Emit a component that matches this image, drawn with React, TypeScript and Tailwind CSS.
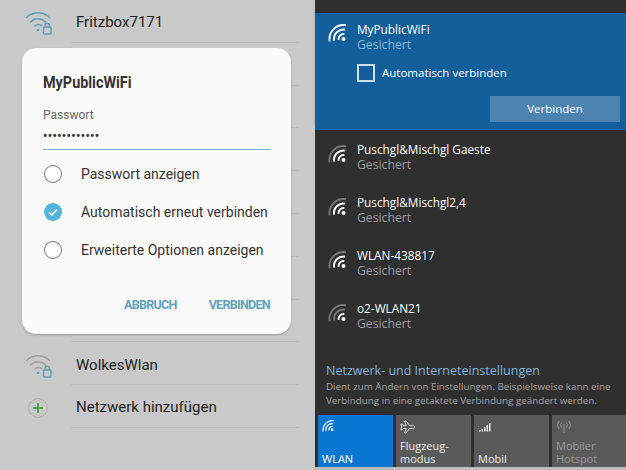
const roboto = "font-['Roboto',sans-serif]";
const segoe = "font-['Open_Sans','Noto_Sans',sans-serif]";

function arc(r: number, cx = 15.5, cy = 15) {
  const a1 = (190 * Math.PI) / 180;
  const a2 = (80 * Math.PI) / 180;
  const x1 = cx + r * Math.cos(a1);
  const y1 = cy - r * Math.sin(a1);
  const x2 = cx + r * Math.cos(a2);
  const y2 = cy - r * Math.sin(a2);
  return `M${x1.toFixed(2)} ${y1.toFixed(2)}A${r} ${r} 0 0 1 ${x2.toFixed(2)} ${y2.toFixed(2)}`;
}

function WinWifi({ bars, size = 20 }: { bars: number; size?: number }) {
  return (
    <svg width={size} height={size} viewBox="0 0 20 20" fill="none" strokeWidth="1.9" className="shrink-0">
      <path d={arc(14)} stroke="#fff" strokeOpacity={bars >= 3 ? 1 : 0.35} />
      <path d={arc(9.5)} stroke="#fff" strokeOpacity={bars >= 2 ? 1 : 0.35} />
      <path d={arc(5)} stroke="#fff" />
      <circle cx="15.5" cy="15" r="2" fill="#fff" />
    </svg>
  );
}

function PhoneWifi({ color }: { color: string }) {
  return (
    <svg width="28" height="25" viewBox="0 0 28 25" fill="none" strokeLinecap="round">
      <path d="M1.5 7.5C8 1 18 1 24.5 7.5" stroke={color} strokeWidth="1.5" />
      <path d="M5.5 12C10 7.7 16 7.7 20.5 12" stroke={color} strokeWidth="1.5" />
      <path d="M9.5 16C11.7 14.2 14.3 14.2 16.5 15.5" stroke={color} strokeWidth="1.5" />
      <circle cx="13" cy="20" r="1.3" fill="#5f9fbd" />
      <rect x="18.5" y="17" width="7.5" height="7" rx="1" stroke="#5f9fbd" strokeWidth="1.5" />
      <path d="M20 17v-1.5a2.2 2.2 0 0 1 4.4 0V17" stroke="#5f9fbd" strokeWidth="1.5" />
    </svg>
  );
}

function Radio({ checked }: { checked?: boolean }) {
  if (checked) {
    return (
      <svg width="18" height="18" viewBox="0 0 18 18" className="shrink-0">
        <circle cx="9" cy="9" r="9" fill="#4fb4de" />
        <path d="M5 9.3l2.8 2.7L13 6.5" fill="none" stroke="#fff" strokeWidth="1.6" />
      </svg>
    );
  }
  return <span className="size-[18px] shrink-0 rounded-full border border-[#777] bg-white" />;
}

const phoneRows = [
  { label: "Fritzbox7171", icon: <PhoneWifi color="#5f9fbd" /> },
  {},
  {},
  {},
  {},
  {},
  {},
  {},
  { label: "WolkesWlan", icon: <PhoneWifi color="#a3a3a3" /> },
  {
    label: "Netzwerk hinzufügen",
    icon: (
      <svg width="20" height="20" viewBox="0 0 20 20" fill="none" className="ml-[3px]">
        <circle cx="10" cy="10" r="9.4" stroke="#adadad" />
        <path d="M10 5v10M5 10h10" stroke="#2f9e35" strokeWidth="1.7" />
      </svg>
    ),
  },
];

function PhonePanel() {
  return (
    <div className={`relative h-full w-[315px] shrink-0 bg-[#c9c9c9] ${roboto}`}>
      <div className="flex flex-col">
        {phoneRows.map((row, i) => (
          <div key={i} className="flex h-[42.8px] items-stretch">
            <div className="flex w-[76px] shrink-0 items-center pl-[25px] pt-[3px]">{row.icon}</div>
            <div className="mr-[16px] flex flex-1 -ml-[5px] items-center border-b border-[#bcbcbc] pl-[5px] pt-[3px] text-[15px] text-[#222]">
              {row.label}
            </div>
          </div>
        ))}
      </div>
      <div className="absolute right-0 top-0 h-[125px] w-[2px] bg-[#bdc3c9]" />

      <div className="absolute left-[22px] top-[48px] flex h-[286px] w-[269px] flex-col rounded-[14px] bg-[#fbfbfb] px-[21px] pt-[25px] shadow-[0_1px_2px_rgba(0,0,0,0.25)]">
        <div className="origin-left scale-x-[0.9] whitespace-nowrap text-[16px] font-bold leading-[20px] text-[#333]">MyPublicWiFi</div>
        <div className="mt-[14px] text-[12px] leading-[16px] text-[#666]">Passwort</div>
        <div className="mt-[5px] h-[22px] border-b border-[#6db4d4] text-[12px] font-bold leading-[16px] tracking-[0.4px] text-[#333]">••••••••••••</div>
        <div className="mt-[5px] flex flex-col">
          {[
            { label: "Passwort anzeigen" },
            { label: "Automatisch erneut verbinden", checked: true },
            { label: "Erweiterte Optionen anzeigen" },
          ].map((o) => (
            <div key={o.label} className="flex h-[38px] items-center gap-[19px] pl-[1px] text-[14px] text-[#333]">
              <Radio checked={o.checked} />
              <span className="whitespace-nowrap">{o.label}</span>
            </div>
          ))}
        </div>
        <div className="mt-[27px] flex justify-end gap-[32px] text-[12.5px] font-bold leading-[18px] tracking-[-0.7px] text-[#5ea2c0]">
          <span>ABBRUCH</span>
          <span>VERBINDEN</span>
        </div>
      </div>
    </div>
  );
}

const networks = [
  { name: "Puschgl&Mischgl Gaeste", bars: 2 },
  { name: "Puschgl&Mischgl2,4", bars: 2 },
  { name: "WLAN-438817", bars: 2 },
  { name: "o2-WLAN21", bars: 1 },
];

function Tile({ label, active, dim, children }: { label: string; active?: boolean; dim?: boolean; children: React.ReactNode }) {
  return (
    <div
      className={`flex h-[52px] w-[75px] flex-col justify-between px-[4px] pb-[2px] pt-[5px] text-[11px] leading-[13px] ${
        active ? "bg-[#0a78d2] text-white" : "bg-[#5a5a5a]"
      } ${dim ? "text-[#9a9a9a]" : active ? "" : "text-[#ececec]"}`}
    >
      <div className="h-[15px]">{children}</div>
      <div className="whitespace-pre-line">{label}</div>
    </div>
  );
}

function WindowsPanel() {
  return (
    <div className={`flex h-full flex-1 flex-col bg-[#2f2f2f] text-white ${segoe}`}>
      <div className="h-[13px]" />
      <div className="flex h-[121px] flex-col bg-[#135f9b] pl-[13px] pr-[7px] pt-[8px]">
        <div className="flex gap-[9px]">
          <div className="pt-[3px]">
            <WinWifi bars={3} />
          </div>
          <div className="text-[11.8px] leading-[16px]">
            <div>MyPublicWiFi</div>
            <div className="text-[12.2px] text-[#8fb4d2]">Gesichert</div>
          </div>
        </div>
        <div className="ml-[29px] mt-[11px] flex items-center gap-[7px] text-[11.5px]">
          <span className="size-[18px] border-2 border-[#cfe0ee]" />
          <span>Automatisch verbinden</span>
        </div>
        <div className="mt-[14px] flex justify-end">
          <div className="flex h-[26px] w-[130px] items-center justify-center bg-[#4d83b0] text-[11.5px]">Verbinden</div>
        </div>
      </div>
      <div className="flex flex-col pl-[13px] pt-[11px]">
        {networks.map((n) => (
          <div key={n.name} className="flex h-[53px] gap-[9px]">
            <div className="pt-[4px]">
              <WinWifi bars={n.bars} />
            </div>
            <div className="text-[11.8px] leading-[16px]">
              <div>{n.name}</div>
              <div className="text-[12.2px] text-[#9d9d9d]">Gesichert</div>
            </div>
          </div>
        ))}
      </div>
      <div className="mt-[9px] px-[11px]">
        <div className="text-[12.5px] leading-[18px] text-[#7fb4de]">Netzwerk- und Interneteinstellungen</div>
        <div className="whitespace-nowrap text-[9.8px] leading-[13.5px] text-[#a3a3a3]">
          Dient zum Ändern von Einstellungen. Beispielsweise kann eine
          <br />
          Verbindung in eine getaktete Verbindung geändert werden.
        </div>
      </div>
      <div className="mt-[8px] flex gap-[3px] pl-[3px]">
        <Tile label="WLAN" active>
          <WinWifi bars={3} size={13} />
        </Tile>
        <Tile label={"Flugzeug-\nmodus"}>
          <svg width="16" height="14" viewBox="0 0 16 14" fill="none" stroke="#eee" strokeWidth="0.9">
            <path d="M14.5 7c0-1-1-1.5-2-1.5H9.5L6 1H4.5l1.7 4.5H3L1.8 4H1l.6 3L1 10h.8L3 8.5h3.2L4.5 13H6l3.5-4.5h3c1 0 2-.5 2-1.5z" />
          </svg>
        </Tile>
        <Tile label="Mobil">
          <svg width="14" height="14" viewBox="0 0 14 14" fill="#eee">
            <rect x="1" y="10" width="1.5" height="1.5" />
            <rect x="3.5" y="9" width="1.5" height="2.5" />
            <rect x="6" y="7" width="1.5" height="4.5" />
            <rect x="8.5" y="5" width="1.5" height="6.5" />
            <rect x="11" y="3" width="1.5" height="8.5" />
          </svg>
        </Tile>
        <Tile label={"Mobiler\nHotspot"} dim>
          <svg width="16" height="14" viewBox="0 0 16 14" fill="none" stroke="#9a9a9a" strokeWidth="0.9">
            <path d="M8 4v9M5.5 2.5c-1 1.5-1 3.5 0 5M10.5 2.5c1 1.5 1 3.5 0 5M3 1c-1.7 2.5-1.7 6 0 8M13 1c1.7 2.5 1.7 6 0 8" />
          </svg>
        </Tile>
      </div>
      <div className="mt-auto h-[3px] bg-[#bdbdbd]" />
    </div>
  );
}

export default function App() {
  return (
    <div className="flex h-[470px] w-[626px] overflow-hidden">
      <PhonePanel />
      <WindowsPanel />
    </div>
  );
}
